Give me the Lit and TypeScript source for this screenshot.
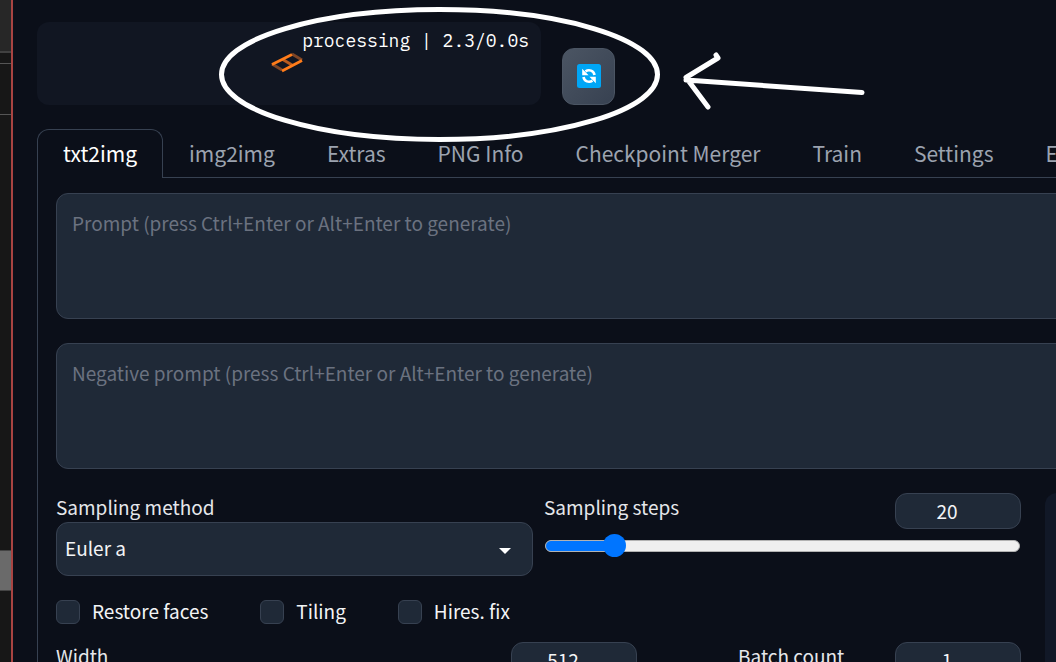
import { LitElement, html, css } from "lit";
import { customElement, property, state } from "lit/decorators.js";

/** Number box with a caption, as used by every slider of the form. */
@customElement("number-head")
class NumberHead extends LitElement {
  @property() label = "";
  @property({ type: Number }) value = 0;

  static styles = css`
    :host {
      display: block;
    }
    .head {
      display: flex;
      justify-content: space-between;
      align-items: flex-start;
    }
    .caption {
      padding-bottom: 2px;
      font-size: 19px;
      line-height: 27px;
      color: #e5e7eb;
    }
    .number {
      box-sizing: border-box;
      width: 126px;
      height: 36px;
      margin: 0;
      padding: 0 22px 2px 0;
      border: 1px solid #374151;
      border-radius: 12px;
      background: #1f2937;
      color: #f3f4f6;
      font: inherit;
      font-size: 19px;
      line-height: 28px;
      text-align: center;
      appearance: textfield;
      -moz-appearance: textfield;
      outline: none;
    }
    .number::-webkit-inner-spin-button {
      appearance: none;
      margin: 0;
    }
  `;

  render() {
    return html`<div class="head">
      <label class="caption" for="n">${this.label}</label>
      <input
        id="n"
        class="number"
        type="number"
        .value=${String(this.value)}
        @input=${(e: Event) =>
          this.dispatchEvent(new CustomEvent("value-change", { detail: Number((e.target as HTMLInputElement).value) }))}
      />
    </div>`;
  }
}

@customElement("app-root")
class AppRoot extends LitElement {
  @state() private steps = 20;
  @state() private tab = "txt2img";

  private tabs = ["txt2img", "img2img", "Extras", "PNG Info", "Checkpoint Merger", "Train", "Settings", "Extensions"];

  static styles = css`
    :host {
      display: flex;
      position: relative;
      height: 100vh;
      overflow: hidden;
      background: #0b0f19;
      color: #f3f4f6;
      font-family: "Source Sans Pro", "Noto Sans CJK SC", sans-serif;
    }
    .edge {
      flex: 0 0 11px;
      display: flex;
      flex-direction: column;
      border-right: 2px solid #a84442;
      background: #171717;
    }
    .edge-top {
      height: 51px;
      background: #272727;
      border-bottom: 2px solid #414141;
    }
    .edge-row {
      height: 10px;
      border-bottom: 1px solid #555;
    }
    .edge-row.tall {
      height: 50px;
    }
    .edge-thumb {
      height: 39px;
      margin-top: 435px;
      border-top: 1px solid #444;
      border-bottom: 1px solid #444;
      background: #6a6a6a;
    }
    .main {
      flex: 1;
      min-width: 0;
    }
    .page {
      box-sizing: border-box;
      width: calc(200% - 46px);
      padding: 22px 24px 0;
    }
    .quick {
      display: flex;
      align-items: flex-end;
      gap: 21px;
    }
    .status {
      box-sizing: border-box;
      display: grid;
      width: 504px;
      height: 83px;
      padding: 6px 12px 8px 8px;
      border-radius: 12px;
      background: #111622;
    }
    .status > * {
      grid-area: 1 / 1;
    }
    .progress {
      justify-self: end;
      font-family: "IBM Plex Mono", "Liberation Mono", monospace;
      font-size: 18px;
      line-height: 26px;
      color: #fff;
    }
    .loader {
      place-self: center;
      width: 34px;
      height: 22px;
    }
    .refresh {
      display: grid;
      place-items: center;
      width: 53px;
      height: 57px;
      padding: 0 0 2px;
      border: 1px solid #4b5563;
      border-radius: 12px;
      background: linear-gradient(to bottom right, #4b5563, #374151);
    }
    .refresh svg {
      width: 24px;
      height: 24px;
    }
    .tabs {
      display: flex;
      margin-top: 24px;
      border-bottom: 1px solid #374151;
    }
    .tab {
      flex: none;
      box-sizing: border-box;
      height: 49px;
      margin-bottom: -1px;
      padding: 0 25px 3px;
      border: 1px solid transparent;
      border-bottom: 0;
      border-radius: 12px 12px 0 0;
      background: none;
      color: #9ca3af;
      font: inherit;
      font-size: 21px;
      line-height: 30px;
      white-space: nowrap;
    }
    .tab.active {
      border-color: #374151;
      background: #0b0f19;
      color: #fff;
    }
    .panel {
      padding: 15px 18px 0;
      border: 1px solid #374151;
      border-top: 0;
    }
    .prompts {
      display: grid;
      gap: 24px;
    }
    .prompt {
      box-sizing: border-box;
      display: block;
      width: 100%;
      height: 126px;
      margin: 0;
      padding: 14px 15px;
      border: 1px solid #374151;
      border-radius: 12px;
      background: #1f2937;
      color: #f3f4f6;
      font: inherit;
      font-size: 19px;
      line-height: 30px;
      resize: none;
      outline: none;
    }
    .prompt::placeholder {
      color: #6b7280;
    }
    .columns {
      display: grid;
      grid-template-columns: 1fr 1fr;
      gap: 24px;
      margin-top: 24px;
    }
    .gallery {
      border-radius: 12px;
      background: #111827;
    }
    .sampling {
      display: grid;
      grid-template-columns: 1fr 1fr;
      gap: 11px;
    }
    .caption {
      display: block;
      padding-bottom: 2px;
      font-size: 19px;
      line-height: 27px;
      color: #e5e7eb;
    }
    .select-wrap {
      display: grid;
      align-items: center;
    }
    .select-wrap > * {
      grid-area: 1 / 1;
    }
    .select {
      box-sizing: border-box;
      width: 100%;
      height: 54px;
      margin: 0;
      padding: 0 8px 3px;
      border: 1px solid #374151;
      border-radius: 12px;
      background: #1f2937;
      color: #f3f4f6;
      font: inherit;
      font-size: 19px;
      appearance: none;
      outline: none;
    }
    .caret {
      justify-self: end;
      width: 12px;
      height: 6px;
      margin: 3px 22px 0 0;
      pointer-events: none;
    }
    .range {
      display: block;
      width: calc(100% - 2px);
      height: 24px;
      margin: 5px 1px 0;
      appearance: none;
      background: none;
    }
    .range::-webkit-slider-runnable-track {
      box-sizing: border-box;
      height: 12px;
      border: 1px solid #b2b2b2;
      border-radius: 6px;
      background: linear-gradient(#0075ff, #0075ff) 0 0 / 15% 100% no-repeat #efefef;
    }
    .range::-webkit-slider-thumb {
      appearance: none;
      width: 23px;
      height: 23px;
      margin-top: -7px;
      border-radius: 50%;
      background: #0075ff;
    }
    .checks {
      display: flex;
      gap: 52px;
      margin-top: 24px;
    }
    .check {
      display: flex;
      align-items: flex-start;
      gap: 12px;
      height: 24px;
      font-size: 19px;
      line-height: 22px;
    }
    .box {
      box-sizing: border-box;
      width: 24px;
      height: 24px;
      margin: 0;
      border: 1px solid #374151;
      border-radius: 6px;
      background: #1f2937;
      appearance: none;
    }
    .box:checked {
      background: #0075ff;
    }
    .sizes {
      display: grid;
      grid-template-columns: 1fr 53px 283px;
      gap: 24px;
      margin-top: 18px;
    }
    .marks {
      position: absolute;
      top: 0;
      left: 0;
      width: 900px;
      height: 160px;
      pointer-events: none;
    }
  `;

  private check(id: string, label: string) {
    return html`<label class="check" for=${id}><input class="box" id=${id} type="checkbox" />${label}</label>`;
  }

  render() {
    return html`
      <div class="edge" aria-hidden="true">
        <div class="edge-top"></div>
        <div class="edge-row"></div>
        <div class="edge-row tall"></div>
        <div class="edge-thumb"></div>
      </div>

      <main class="main">
        <div class="page">
          <div class="quick">
            <div class="status" role="status">
              <svg class="loader" viewBox="0 0 34 22" fill="none" aria-hidden="true">
                <path d="M2 12 12 18M22 2 32 8" stroke="#7d4526" stroke-width="3" />
                <path d="M12 7 22 13" stroke="#b85a1e" stroke-width="3" />
                <path d="M2 12.500 22 2.500M12 19 32 8.500" stroke="#ff7c1a" stroke-width="2.800" />
              </svg>
              <span class="progress">processing | 2.3/0.0s</span>
            </div>
            <button class="refresh" aria-label="Refresh">
              <svg viewBox="0 0 24 24" aria-hidden="true">
                <rect width="24" height="24" rx="2.500" fill="#00a6f6" />
                <g fill="none" stroke="#fff" stroke-width="2.600">
                  <path d="M8.500 7.300C12 5 16.800 6.500 17.500 11" />
                  <path d="M15.500 16.700C12 19 7.200 17.500 6.500 13" />
                </g>
                <path d="M5.200 4.800V11.200H11.600ZM18.800 19.200V12.800H12.400Z" fill="#fff" />
              </svg>
            </button>
          </div>

          <nav class="tabs" role="tablist">
            ${this.tabs.map(
              (t) => html`<button
                class="tab ${t === this.tab ? "active" : ""}"
                role="tab"
                aria-selected=${t === this.tab}
                @click=${() => (this.tab = t)}
              >${t}</button>`
            )}
          </nav>

          <section class="panel">
            <div class="prompts">
              <textarea class="prompt" aria-label="Prompt" placeholder="Prompt (press Ctrl+Enter or Alt+Enter to generate)"></textarea>
              <textarea class="prompt" aria-label="Negative prompt" placeholder="Negative prompt (press Ctrl+Enter or Alt+Enter to generate)"></textarea>
            </div>

            <div class="columns">
              <div class="settings">
                <div class="sampling">
                  <div>
                    <label class="caption" for="method">Sampling method</label>
                    <div class="select-wrap">
                      <select class="select" id="method">
                        <option>Euler a</option>
                      </select>
                      <svg class="caret" viewBox="0 0 12 6" aria-hidden="true"><path d="M0 0H12L6 6Z" fill="#fff" /></svg>
                    </div>
                  </div>
                  <div>
                    <number-head
                      label="Sampling steps"
                      .value=${this.steps}
                      @value-change=${(e: CustomEvent) => (this.steps = e.detail)}
                    ></number-head>
                    <input
                      class="range"
                      type="range"
                      aria-label="Sampling steps"
                      min="1"
                      max="150"
                      .value=${String(this.steps)}
                      @input=${(e: Event) => (this.steps = Number((e.target as HTMLInputElement).value))}
                    />
                  </div>
                </div>

                <div class="checks">
                  ${this.check("faces", "Restore faces")} ${this.check("tiling", "Tiling")}
                  ${this.check("hires", "Hires. fix")}
                </div>

                <div class="sizes">
                  <number-head label="Width" .value=${512}></number-head>
                  <span></span>
                  <number-head label="Batch count" .value=${1}></number-head>
                </div>
              </div>
              <div class="gallery"></div>
            </div>
          </section>
        </div>
      </main>

      <svg class="marks" viewBox="0 0 900 160" fill="none" stroke="#fff" stroke-width="5" stroke-linecap="round" stroke-linejoin="round" aria-hidden="true">
        <ellipse cx="439.500" cy="74.500" rx="218" ry="65" />
        <path d="M862 92.500 686 80M716 55 718 58 686 77.500 708 107" />
      </svg>
    `;
  }
}
